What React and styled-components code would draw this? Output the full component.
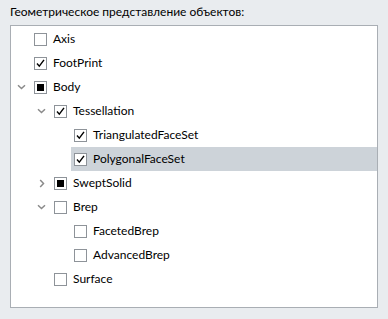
import React from "react";
import styled, { createGlobalStyle } from "styled-components";

const Global = createGlobalStyle`
  html, body { margin: 0; padding: 0; background: #e9ecef; }
  body { font-family: Lato, "Noto Sans", sans-serif; font-size: 12px; color: #000; }
`;

const Page = styled.div`
  width: 388px;
  height: 319px;
  box-sizing: border-box;
  padding: 4px 10px 0 10px;
  background: #e9ecef;
`;

const Title = styled.div`
  height: 16px;
  line-height: 16px;
  margin-bottom: 5px;
`;

const TreeBox = styled.div`
  box-sizing: border-box;
  width: 368px;
  height: 283px;
  border: 1px solid #a9aeb4;
  background: #ffffff;
  padding-top: 1px;
`;

const Row = styled.div`
  display: flex;
  align-items: center;
  height: 24px;
  padding-left: ${(p) => 4 + p.$level * 20}px;
`;

const Expander = styled.div`
  width: 13px;
  height: 24px;
  margin-right: 3px;
  display: flex;
  align-items: center;
  justify-content: center;
  flex: none;
`;

const Content = styled.div`
  flex: 1;
  height: 24px;
  display: flex;
  align-items: center;
  padding-left: 3px;
  background: ${(p) => (p.$selected ? "#cdd3d9" : "transparent")};
`;

const Box = styled.div`
  box-sizing: border-box;
  width: 13px;
  height: 13px;
  border: 1px solid #8e9399;
  background: #fff;
  margin-right: 6px;
  display: flex;
  align-items: center;
  justify-content: center;
  flex: none;
`;

const Square = styled.div`
  width: 7px;
  height: 7px;
  background: #000;
`;

const Label = styled.span`
  line-height: 16px;
  white-space: nowrap;
`;

const Chevron = ({ open }) =>
  open ? (
    <svg width="9" height="6" viewBox="0 0 9 6">
      <path d="M1 1.2 L4.5 4.5 L8 1.2" fill="none" stroke="#8a8a8a" strokeWidth="1.5" />
    </svg>
  ) : (
    <svg width="6" height="9" viewBox="0 0 6 9">
      <path d="M1.2 1 L4.5 4.5 L1.2 8" fill="none" stroke="#8a8a8a" strokeWidth="1.5" />
    </svg>
  );

const Check = () => (
  <svg width="11" height="11" viewBox="0 0 11 11">
    <path d="M2 5.5 L4.3 8.2 L9 1.8" fill="none" stroke="#000" strokeWidth="1.4" />
  </svg>
);

const items = [
  { label: "Axis", level: 0, state: "off" },
  { label: "FootPrint", level: 0, state: "on" },
  { label: "Body", level: 0, state: "mixed", exp: "open" },
  { label: "Tessellation", level: 1, state: "on", exp: "open" },
  { label: "TriangulatedFaceSet", level: 2, state: "on" },
  { label: "PolygonalFaceSet", level: 2, state: "on", selected: true },
  { label: "SweptSolid", level: 1, state: "mixed", exp: "closed" },
  { label: "Brep", level: 1, state: "off", exp: "open" },
  { label: "FacetedBrep", level: 2, state: "off" },
  { label: "AdvancedBrep", level: 2, state: "off" },
  { label: "Surface", level: 1, state: "off" },
];

export default function App() {
  return (
    <>
      <Global />
      <Page>
        <Title>Геометрическое представление объектов:</Title>
        <TreeBox>
          {items.map((it) => (
            <Row key={it.label} $level={it.level}>
              <Expander>{it.exp && <Chevron open={it.exp === "open"} />}</Expander>
              <Content $selected={it.selected}>
                <Box>
                  {it.state === "on" && <Check />}
                  {it.state === "mixed" && <Square />}
                </Box>
                <Label>{it.label}</Label>
              </Content>
            </Row>
          ))}
        </TreeBox>
      </Page>
    </>
  );
}
